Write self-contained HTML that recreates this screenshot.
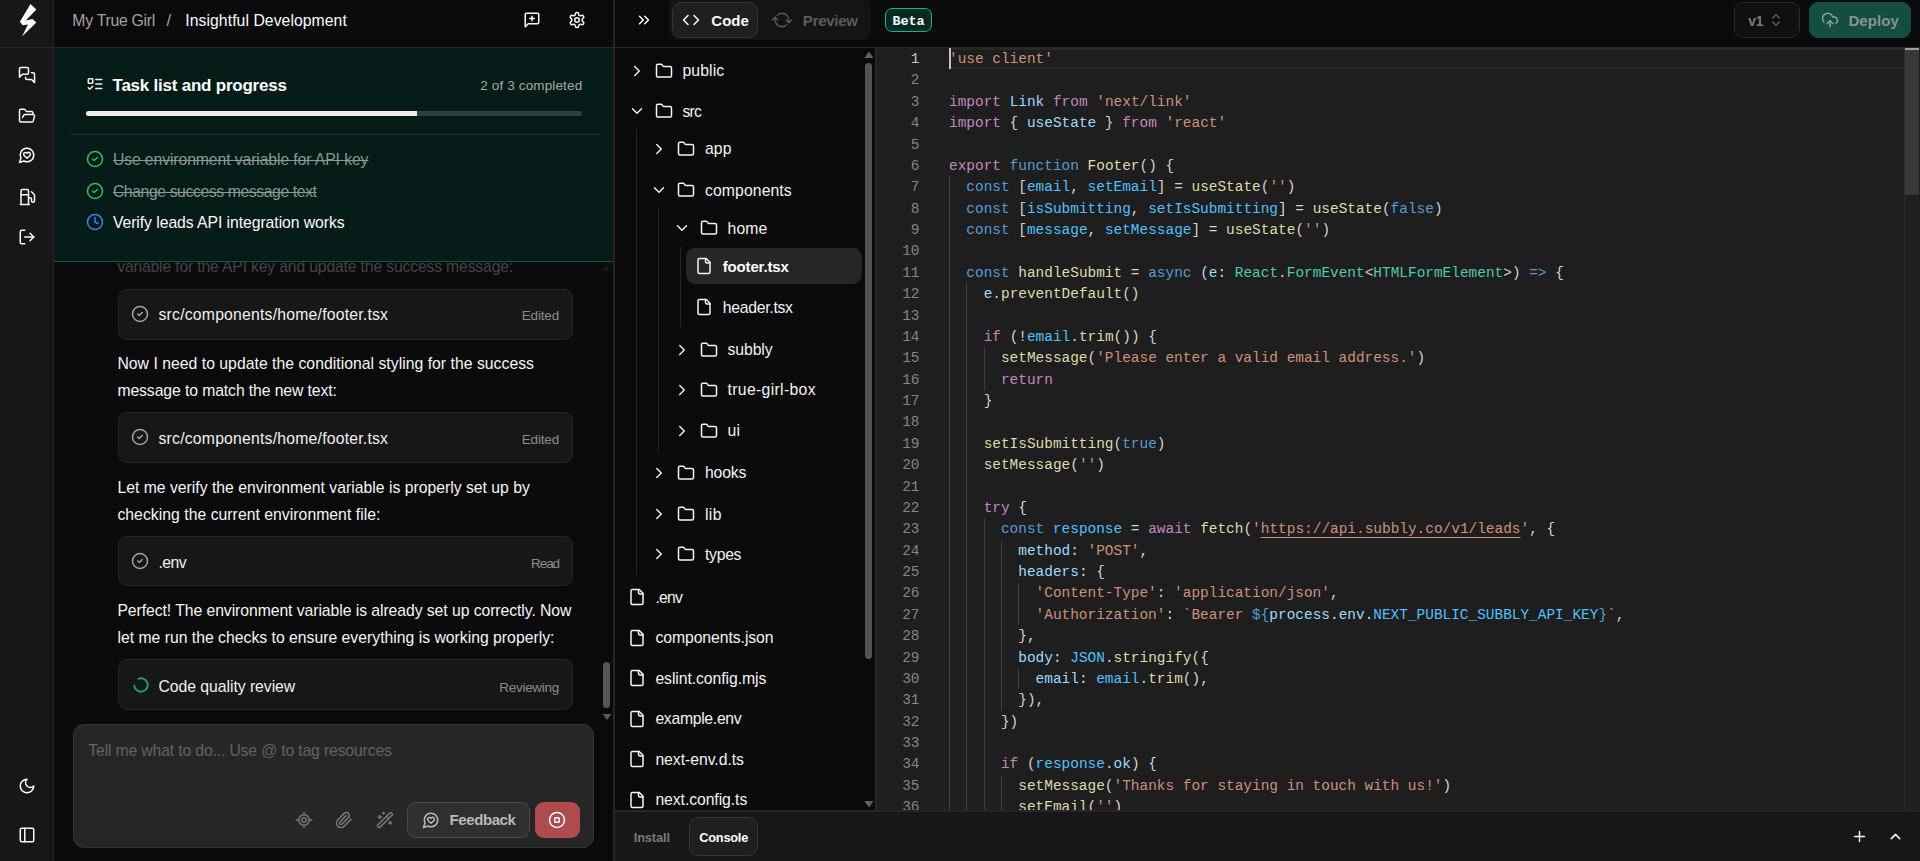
<!DOCTYPE html>
<html lang="en"><head><meta charset="utf-8"><title>Insightful Development</title>
<style>
html,body{margin:0;padding:0}
body{width:1920px;height:861px;overflow:hidden;position:relative;background:#0a0a0a;font-family:'Liberation Sans', sans-serif;}
.b{position:absolute}
.ic{position:absolute;display:block;overflow:visible}
.t{position:absolute;white-space:pre;}
.ln{position:absolute;left:0;margin-top:1px;width:43.5px;text-align:right;font-family:'Liberation Mono', monospace;font-size:14.43px;line-height:21.375px;height:21.375px;white-space:pre}
.cl{position:absolute;left:73px;margin-top:1px;font-family:'Liberation Mono', monospace;font-size:14.43px;line-height:21.375px;height:21.375px;white-space:pre;color:#d4d4d4;letter-spacing:0.002px}
</style></head>
<body>
<div class="b" style="left:0.00px;top:0.00px;width:53.00px;height:861.00px;background:#171717;"></div>
<div class="b" style="left:53.00px;top:0.00px;width:1.00px;height:861.00px;background:#262626;"></div>
<div class="b" style="left:0.00px;top:47.00px;width:1920.00px;height:1.00px;background:#262626;"></div>
<div class="b" style="left:613.00px;top:0.00px;width:2.00px;height:861.00px;background:#262626;"></div>
<svg class="ic" style="left:0;top:0;width:54px;height:47px" viewBox="0 0 54 47"><polygon fill="#fafafa" points="30.45,4.1 36.4,9.5 25.8,20.4 32.5,18.9 36.4,22.5 22.0,36.4 27.9,24.4 22.6,25.3 19.9,21.7"/></svg>
<svg class="ic" style="left:18.00px;top:66.00px;width:18px;height:18px;" viewBox="0 0 24 24" fill="none" stroke="#fafafa" stroke-width="2" stroke-linecap="round" stroke-linejoin="round"><path d="M14 9a2 2 0 0 1-2 2H6l-4 4V4a2 2 0 0 1 2-2h8a2 2 0 0 1 2 2z"/><path d="M18 9h2a2 2 0 0 1 2 2v11l-4-4h-6a2 2 0 0 1-2-2v-1"/></svg>
<svg class="ic" style="left:18.00px;top:106.70px;width:18px;height:18px;" viewBox="0 0 24 24" fill="none" stroke="#fafafa" stroke-width="2" stroke-linecap="round" stroke-linejoin="round"><path d="m6 14 1.5-2.9A2 2 0 0 1 9.24 10H20a2 2 0 0 1 1.94 2.5l-1.54 6a2 2 0 0 1-1.95 1.5H4a2 2 0 0 1-2-2V5a2 2 0 0 1 2-2h3.9a2 2 0 0 1 1.69.9l.81 1.2a2 2 0 0 0 1.67.9H18a2 2 0 0 1 2 2v2"/></svg>
<svg class="ic" style="left:18.00px;top:146.30px;width:18px;height:18px;" viewBox="0 0 24 24" fill="none" stroke="#fafafa" stroke-width="2" stroke-linecap="round" stroke-linejoin="round"><path d="M7.9 20A9 9 0 1 0 4 16.1L2 22Z"/><path d="M15.8 9.2a2.5 2.5 0 0 0-3.5 0l-.3.4-.35-.3a2.42 2.42 0 1 0-3.2 3.6l3.6 3.5 3.6-3.5c1.2-1.2 1.1-2.7.2-3.7"/></svg>
<svg class="ic" style="left:18.00px;top:188.00px;width:18px;height:18px;" viewBox="0 0 24 24" fill="none" stroke="#fafafa" stroke-width="2" stroke-linecap="round" stroke-linejoin="round"><line x1="3" x2="15" y1="22" y2="22"/><line x1="4" x2="14" y1="9" y2="9"/><path d="M14 22V4a2 2 0 0 0-2-2H6a2 2 0 0 0-2 2v18"/><path d="M14 13h2a2 2 0 0 1 2 2v2a2 2 0 0 0 2 2a2 2 0 0 0 2-2V9.83a2 2 0 0 0-.59-1.42L18 5"/></svg>
<svg class="ic" style="left:18.00px;top:228.30px;width:18px;height:18px;" viewBox="0 0 24 24" fill="none" stroke="#fafafa" stroke-width="2" stroke-linecap="round" stroke-linejoin="round"><path d="M9 21H5a2 2 0 0 1-2-2V5a2 2 0 0 1 2-2h4"/><polyline points="16 17 21 12 16 7"/><line x1="21" x2="9" y1="12" y2="12"/></svg>
<svg class="ic" style="left:18.00px;top:777.00px;width:18px;height:18px;" viewBox="0 0 24 24" fill="none" stroke="#fafafa" stroke-width="2" stroke-linecap="round" stroke-linejoin="round"><path d="M12 3a6 6 0 0 0 9 9 9 9 0 1 1-9-9Z"/></svg>
<svg class="ic" style="left:18.00px;top:826.00px;width:18px;height:18px;" viewBox="0 0 24 24" fill="none" stroke="#fafafa" stroke-width="2" stroke-linecap="round" stroke-linejoin="round"><rect width="18" height="18" x="3" y="3" rx="2"/><path d="M9 3v18"/></svg>
<span class="t" style="top:11px;font-size:15.75px;line-height:19px;color:#a3a3a3;left:72.30px;letter-spacing:-0.251px;">My True Girl</span>
<span class="t" style="top:10px;font-size:16.5px;line-height:20px;color:#a3a3a3;left:166.50px;">/</span>
<span class="t" style="top:11px;font-size:15.75px;line-height:19px;color:#fafafa;left:185.30px;letter-spacing:0.061px;">Insightful Development</span>
<svg class="ic" style="left:523.00px;top:11.00px;width:18px;height:18px;" viewBox="0 0 24 24" fill="none" stroke="#fafafa" stroke-width="2" stroke-linecap="round" stroke-linejoin="round"><path d="M21 15a2 2 0 0 1-2 2H7l-4 4V5a2 2 0 0 1 2-2h14a2 2 0 0 1 2 2z"/><path d="M12 7v6"/><path d="M9 10h6"/></svg>
<svg class="ic" style="left:568.00px;top:11.00px;width:18px;height:18px;" viewBox="0 0 24 24" fill="none" stroke="#fafafa" stroke-width="2" stroke-linecap="round" stroke-linejoin="round"><path d="M12.22 2h-.44a2 2 0 0 0-2 2v.18a2 2 0 0 1-1 1.73l-.43.25a2 2 0 0 1-2 0l-.15-.08a2 2 0 0 0-2.73.73l-.22.38a2 2 0 0 0 .73 2.73l.15.1a2 2 0 0 1 1 1.72v.51a2 2 0 0 1-1 1.74l-.15.09a2 2 0 0 0-.73 2.73l.22.38a2 2 0 0 0 2.73.73l.15-.08a2 2 0 0 1 2 0l.43.25a2 2 0 0 1 1 1.73V20a2 2 0 0 0 2 2h.44a2 2 0 0 0 2-2v-.18a2 2 0 0 1 1-1.73l.43-.25a2 2 0 0 1 2 0l.15.08a2 2 0 0 0 2.73-.73l.22-.39a2 2 0 0 0-.73-2.73l-.15-.08a2 2 0 0 1-1-1.74v-.5a2 2 0 0 1 1-1.74l.15-.09a2 2 0 0 0 .73-2.73l-.22-.38a2 2 0 0 0-2.73-.73l-.15.08a2 2 0 0 1-2 0l-.43-.25a2 2 0 0 1-1-1.73V4a2 2 0 0 0-2-2z"/><circle cx="12" cy="12" r="3"/></svg>
<div class="b" style="left:54.00px;top:48.00px;width:559.00px;height:214.00px;background:#051b17;"></div>
<div class="b" style="left:54.00px;top:261.00px;width:559.00px;height:1.00px;background:#0c5a49;"></div>
<svg class="ic" style="left:86.00px;top:75.00px;width:18px;height:18px;" viewBox="0 0 24 24" fill="none" stroke="#f0f0f0" stroke-width="2" stroke-linecap="round" stroke-linejoin="round"><rect x="3" y="5" width="6" height="6" rx="1"/><path d="m3 17 2 2 4-4"/><path d="M13 6h8"/><path d="M13 12h8"/><path d="M13 18h8"/></svg>
<span class="t" style="top:75px;font-size:17px;line-height:21px;color:#ffffff;left:112.50px;font-weight:700;letter-spacing:-0.229px;">Task list and progress</span>
<span class="t" style="top:77px;font-size:13.5px;line-height:17px;color:#a3a9a8;right:1337.70px;letter-spacing:0.138px;">2 of 3 completed</span>
<div class="b" style="left:86.00px;top:110.50px;width:496.30px;height:5.50px;background:#2c403e;border-radius:3px;"></div>
<div class="b" style="left:86.00px;top:110.50px;width:330.80px;height:5.50px;background:#ececec;border-radius:3px 0 0 3px;"></div>
<div class="b" style="left:67.50px;top:134.00px;width:532.50px;height:1.00px;background:#1c2f2d;"></div>
<svg class="ic" style="left:86.00px;top:150.00px;width:18px;height:18px;" viewBox="0 0 24 24" fill="none" stroke="#22c55e" stroke-width="2" stroke-linecap="round" stroke-linejoin="round"><circle cx="12" cy="12" r="10"/><path d="m9 12 2 2 4-4"/></svg>
<span class="t" style="top:150px;font-size:15.75px;line-height:19px;color:#8b9695;left:112.90px;letter-spacing:-0.101px;text-decoration:line-through;">Use environment variable for API key</span>
<svg class="ic" style="left:86.00px;top:181.60px;width:18px;height:18px;" viewBox="0 0 24 24" fill="none" stroke="#22c55e" stroke-width="2" stroke-linecap="round" stroke-linejoin="round"><circle cx="12" cy="12" r="10"/><path d="m9 12 2 2 4-4"/></svg>
<span class="t" style="top:182px;font-size:15.75px;line-height:19px;color:#8b9695;left:112.90px;letter-spacing:-0.400px;text-decoration:line-through;">Change success message text</span>
<svg class="ic" style="left:86.00px;top:213.20px;width:18px;height:18px;" viewBox="0 0 24 24" fill="none" stroke="#3b82f6" stroke-width="2" stroke-linecap="round" stroke-linejoin="round"><circle cx="12" cy="12" r="10"/><polyline points="12 6 12 12 16 14"/></svg>
<span class="t" style="top:213px;font-size:15.75px;line-height:19px;color:#fafafa;left:112.90px;letter-spacing:-0.059px;">Verify leads API integration works</span>
<div class="b" style="left:54px;top:262px;width:559px;height:20px;overflow:hidden">
<span class="t" style="top:-5px;font-size:15.75px;line-height:19px;color:#444444;left:63.20px;letter-spacing:-0.170px;">variable for the API key and update the success message:</span>
</div>
<div class="b" style="left:117.50px;top:289.00px;width:455.50px;height:51.00px;background:#171717;border:1px solid #262626;border-radius:9px;box-sizing:border-box;"></div>
<svg class="ic" style="left:131.10px;top:305.10px;width:18px;height:18px;" viewBox="0 0 24 24" fill="none" stroke="#a3a3a3" stroke-width="2" stroke-linecap="round" stroke-linejoin="round"><circle cx="12" cy="12" r="10"/><path d="m9 12 2 2 4-4"/></svg>
<span class="t" style="top:305px;font-size:15.75px;line-height:19px;color:#f0f0f0;left:158.50px;letter-spacing:0.216px;">src/components/home/footer.tsx</span>
<span class="t" style="top:307px;font-size:13.5px;line-height:17px;color:#8c8c8c;right:1361.00px;letter-spacing:-0.176px;">Edited</span>
<div class="b" style="left:117.50px;top:412.00px;width:455.50px;height:51.00px;background:#171717;border:1px solid #262626;border-radius:9px;box-sizing:border-box;"></div>
<svg class="ic" style="left:131.10px;top:428.10px;width:18px;height:18px;" viewBox="0 0 24 24" fill="none" stroke="#a3a3a3" stroke-width="2" stroke-linecap="round" stroke-linejoin="round"><circle cx="12" cy="12" r="10"/><path d="m9 12 2 2 4-4"/></svg>
<span class="t" style="top:429px;font-size:15.75px;line-height:19px;color:#f0f0f0;left:158.50px;letter-spacing:0.216px;">src/components/home/footer.tsx</span>
<span class="t" style="top:431px;font-size:13.5px;line-height:17px;color:#8c8c8c;right:1361.00px;letter-spacing:-0.176px;">Edited</span>
<div class="b" style="left:117.50px;top:536.00px;width:455.50px;height:50.00px;background:#171717;border:1px solid #262626;border-radius:9px;box-sizing:border-box;"></div>
<svg class="ic" style="left:131.10px;top:551.60px;width:18px;height:18px;" viewBox="0 0 24 24" fill="none" stroke="#a3a3a3" stroke-width="2" stroke-linecap="round" stroke-linejoin="round"><circle cx="12" cy="12" r="10"/><path d="m9 12 2 2 4-4"/></svg>
<span class="t" style="top:553px;font-size:15.75px;line-height:19px;color:#f0f0f0;left:158.50px;letter-spacing:-0.560px;">.env</span>
<span class="t" style="top:555px;font-size:13.5px;line-height:17px;color:#8c8c8c;right:1361.00px;letter-spacing:-1.094px;">Read</span>
<div class="b" style="left:117.50px;top:659.00px;width:455.50px;height:51.00px;background:#171717;border:1px solid #262626;border-radius:9px;box-sizing:border-box;"></div>
<svg class="ic" style="left:131.60px;top:675.70px;width:18px;height:18px;transform:rotate(-112deg);" viewBox="0 0 24 24" fill="none" stroke="#1f9d80" stroke-width="2.5" stroke-linecap="round" stroke-linejoin="round"><path d="M21 12a9 9 0 1 1-6.219-8.56"/></svg>
<span class="t" style="top:677px;font-size:15.75px;line-height:19px;color:#f0f0f0;left:158.50px;letter-spacing:-0.042px;">Code quality review</span>
<span class="t" style="top:679px;font-size:13.5px;line-height:17px;color:#8c8c8c;right:1361.00px;letter-spacing:-0.285px;">Reviewing</span>
<span class="t" style="top:354px;font-size:15.75px;line-height:19px;color:#f5f5f5;left:117.40px;letter-spacing:0.027px;">Now I need to update the conditional styling for the success</span>
<span class="t" style="top:381px;font-size:15.75px;line-height:19px;color:#f5f5f5;left:117.40px;letter-spacing:-0.096px;">message to match the new text:</span>
<span class="t" style="top:478px;font-size:15.75px;line-height:19px;color:#f5f5f5;left:117.40px;letter-spacing:0.003px;">Let me verify the environment variable is properly set up by</span>
<span class="t" style="top:505px;font-size:15.75px;line-height:19px;color:#f5f5f5;left:117.40px;letter-spacing:0.033px;">checking the current environment file:</span>
<span class="t" style="top:601px;font-size:15.75px;line-height:19px;color:#f5f5f5;left:117.40px;letter-spacing:-0.063px;">Perfect! The environment variable is already set up correctly. Now</span>
<span class="t" style="top:628px;font-size:15.75px;line-height:19px;color:#f5f5f5;left:117.40px;letter-spacing:0.003px;">let me run the checks to ensure everything is working properly:</span>
<svg class="ic" style="left:601px;top:264px;width:10px;height:8px" viewBox="0 0 10 8"><polygon points="5,1.5 9,6.5 1,6.5" fill="#1c1c1c"/></svg>
<div class="b" style="left:602.80px;top:662.00px;width:7.20px;height:46.00px;background:#565656;border-radius:3.6px;"></div>
<svg class="ic" style="left:601.5px;top:713px;width:10px;height:8px" viewBox="0 0 10 8"><polygon points="0.6,1 9.4,1 5,7" fill="#5a5a5a"/></svg>
<div class="b" style="left:73.00px;top:724.00px;width:521.30px;height:124.00px;background:#262626;border:1px solid #363636;border-radius:11px;box-sizing:border-box;"></div>
<span class="t" style="top:741px;font-size:15.75px;line-height:19px;color:#636363;left:88.30px;letter-spacing:-0.152px;">Tell me what to do... Use @ to tag resources</span>
<svg class="ic" style="left:295.00px;top:811.00px;width:18px;height:18px;" viewBox="0 0 24 24" fill="none" stroke="#7a7a7a" stroke-width="2" stroke-linecap="round" stroke-linejoin="round"><line x1="2" x2="5" y1="12" y2="12"/><line x1="19" x2="22" y1="12" y2="12"/><line x1="12" x2="12" y1="2" y2="5"/><line x1="12" x2="12" y1="19" y2="22"/><circle cx="12" cy="12" r="7"/><circle cx="12" cy="12" r="3"/></svg>
<svg class="ic" style="left:335.20px;top:811.00px;width:18px;height:18px;" viewBox="0 0 24 24" fill="none" stroke="#7a7a7a" stroke-width="2" stroke-linecap="round" stroke-linejoin="round"><path d="m21.44 11.05-9.19 9.19a6 6 0 0 1-8.49-8.49l8.57-8.57A4 4 0 1 1 18 8.84l-8.59 8.57a2 2 0 0 1-2.83-2.83l8.49-8.48"/></svg>
<svg class="ic" style="left:375.80px;top:811.00px;width:18px;height:18px;" viewBox="0 0 24 24" fill="none" stroke="#7a7a7a" stroke-width="2" stroke-linecap="round" stroke-linejoin="round"><path d="m21.64 3.64-1.28-1.28a1.21 1.21 0 0 0-1.72 0L2.36 18.64a1.21 1.21 0 0 0 0 1.72l1.28 1.28a1.2 1.2 0 0 0 1.72 0L21.64 5.36a1.2 1.2 0 0 0 0-1.72"/><path d="m14 7 3 3"/><path d="M5 6v4"/><path d="M19 14v4"/><path d="M10 2v2"/><path d="M7 8H3"/><path d="M21 16h-4"/><path d="M11 3H9"/></svg>
<div class="b" style="left:407.00px;top:802.00px;width:123.00px;height:36.00px;background:#2f2f2f;border:1px solid #4a4a4a;border-radius:9px;box-sizing:border-box;"></div>
<svg class="ic" style="left:422.00px;top:811.00px;width:18px;height:18px;" viewBox="0 0 24 24" fill="none" stroke="#b8b8b8" stroke-width="2" stroke-linecap="round" stroke-linejoin="round"><path d="M7.9 20A9 9 0 1 0 4 16.1L2 22Z"/><path d="M15.8 9.2a2.5 2.5 0 0 0-3.5 0l-.3.4-.35-.3a2.42 2.42 0 1 0-3.2 3.6l3.6 3.5 3.6-3.5c1.2-1.2 1.1-2.7.2-3.7"/></svg>
<span class="t" style="top:810px;font-size:15px;line-height:19px;color:#b8b8b8;left:449.50px;font-weight:700;letter-spacing:-0.400px;">Feedback</span>
<div class="b" style="left:535.00px;top:802.00px;width:45.00px;height:36.00px;background:#ad4b4f;border-radius:9px;"></div>
<svg class="ic" style="left:548.30px;top:811.00px;width:18px;height:18px;" viewBox="0 0 24 24" fill="none" stroke="#ffffff" stroke-width="2" stroke-linecap="round" stroke-linejoin="round"><circle cx="12" cy="12" r="10"/><rect x="9" y="9" width="6" height="6" rx="1"/></svg>
<svg class="ic" style="left:635.00px;top:11.00px;width:18px;height:18px;" viewBox="0 0 24 24" fill="none" stroke="#fafafa" stroke-width="2" stroke-linecap="round" stroke-linejoin="round"><path d="m6 17 5-5-5-5"/><path d="m13 17 5-5-5-5"/></svg>
<div class="b" style="left:669.00px;top:0.00px;width:202.00px;height:40.00px;background:#141414;border-radius:10px;border-top-left-radius:6px;border-top-right-radius:6px;"></div>
<div class="b" style="left:672.00px;top:2.00px;width:86.00px;height:36.00px;background:#1f1f1f;border:1px solid #353535;border-radius:9px;box-sizing:border-box;"></div>
<svg class="ic" style="left:682.00px;top:11.00px;width:18px;height:18px;" viewBox="0 0 24 24" fill="none" stroke="#fafafa" stroke-width="2" stroke-linecap="round" stroke-linejoin="round"><polyline points="16 18 22 12 16 6"/><polyline points="8 6 2 12 8 18"/></svg>
<span class="t" style="top:11px;font-size:15px;line-height:19px;color:#fafafa;left:711.30px;font-weight:700;letter-spacing:0.000px;">Code</span>
<svg class="ic" style="left:773.00px;top:10.80px;width:18px;height:18px;transform:rotate(45deg);" viewBox="0 0 24 24" fill="none" stroke="#565656" stroke-width="2" stroke-linecap="round" stroke-linejoin="round"><path d="M3 12a9 9 0 0 1 9-9 9.75 9.75 0 0 1 6.74 2.74L21 8"/><path d="M21 3v5h-5"/><path d="M21 12a9 9 0 0 1-9 9 9.75 9.75 0 0 1-6.74-2.74L3 16"/><path d="M8 16H3v5"/></svg>
<span class="t" style="top:11px;font-size:15px;line-height:19px;color:#5c5c5c;left:802.80px;font-weight:700;letter-spacing:-0.253px;">Preview</span>
<div class="b" style="left:885.00px;top:8.00px;width:47.00px;height:24.00px;background:#032b24;border:1px solid #12b583;border-radius:7px;box-sizing:border-box;"></div>
<span class="t" style="top:13px;font-size:13.5px;line-height:17px;color:#ffffff;left:892.40px;font-weight:700;font-family:'Liberation Mono', monospace;letter-spacing:-0.069px;">Beta</span>
<div class="b" style="left:1734.00px;top:2.00px;width:66.00px;height:36.00px;background:#101010;border:1px solid #2a2a2a;border-radius:9px;box-sizing:border-box;"></div>
<span class="t" style="top:13px;font-size:13.8px;line-height:17px;color:#7c7c7c;left:1748.20px;font-weight:700;">v1</span>
<svg class="ic" style="left:1768.00px;top:12.00px;width:16px;height:16px;" viewBox="0 0 24 24" fill="none" stroke="#5a5a5a" stroke-width="2" stroke-linecap="round" stroke-linejoin="round"><path d="m7 15 5 5 5-5"/><path d="m7 9 5-5 5 5"/></svg>
<div class="b" style="left:1809.00px;top:2.00px;width:102.00px;height:36.00px;background:#134e40;border-radius:9px;"></div>
<svg class="ic" style="left:1821.00px;top:11.00px;width:18px;height:18px;" viewBox="0 0 24 24" fill="none" stroke="#8fa09b" stroke-width="2" stroke-linecap="round" stroke-linejoin="round"><path d="M12 13v8"/><path d="M4 14.899A7 7 0 1 1 15.71 8h1.79a4.5 4.5 0 0 1 2.5 8.242"/><path d="m8 17 4-4 4 4"/></svg>
<span class="t" style="top:11px;font-size:15px;line-height:19px;color:#8a948f;left:1848.40px;font-weight:700;letter-spacing:0.097px;">Deploy</span>
<div class="b" style="left:686.00px;top:248.00px;width:175.50px;height:36.00px;background:#262626;border-radius:9px;"></div>
<div class="b" style="left:636.00px;top:129.00px;width:1.00px;height:446.00px;background:#262626;"></div>
<div class="b" style="left:658.00px;top:208.00px;width:1.00px;height:243.00px;background:#262626;"></div>
<div class="b" style="left:680.00px;top:246.00px;width:1.00px;height:81.00px;background:#262626;"></div>
<div class="b" style="left:615px;top:48px;width:261px;height:762px;overflow:hidden">
<svg class="ic" style="left:13.00px;top:13.80px;width:18px;height:18px;" viewBox="0 0 24 24" fill="none" stroke="#f0f0f0" stroke-width="2" stroke-linecap="round" stroke-linejoin="round"><path d="m9 18 6-6-6-6"/></svg>
<svg class="ic" style="left:39.80px;top:13.80px;width:18px;height:18px;" viewBox="0 0 24 24" fill="none" stroke="#f5f5f5" stroke-width="2" stroke-linecap="round" stroke-linejoin="round"><path d="M20 20a2 2 0 0 0 2-2V8a2 2 0 0 0-2-2h-7.9a2 2 0 0 1-1.69-.9L9.6 3.9A2 2 0 0 0 7.93 3H4a2 2 0 0 0-2 2v13a2 2 0 0 0 2 2Z"/></svg>
<span class="t" style="top:13px;font-size:15.75px;line-height:19px;color:#f2f2f2;left:67.50px;letter-spacing:0.109px;">public</span>
<svg class="ic" style="left:13.00px;top:53.70px;width:18px;height:18px;" viewBox="0 0 24 24" fill="none" stroke="#f0f0f0" stroke-width="2" stroke-linecap="round" stroke-linejoin="round"><path d="m6 9 6 6 6-6"/></svg>
<svg class="ic" style="left:39.80px;top:53.70px;width:18px;height:18px;" viewBox="0 0 24 24" fill="none" stroke="#f5f5f5" stroke-width="2" stroke-linecap="round" stroke-linejoin="round"><path d="M20 20a2 2 0 0 0 2-2V8a2 2 0 0 0-2-2h-7.9a2 2 0 0 1-1.69-.9L9.6 3.9A2 2 0 0 0 7.93 3H4a2 2 0 0 0-2 2v13a2 2 0 0 0 2 2Z"/></svg>
<span class="t" style="top:54px;font-size:15.75px;line-height:19px;color:#f2f2f2;left:67.50px;letter-spacing:-0.800px;">src</span>
<svg class="ic" style="left:35.10px;top:92.20px;width:18px;height:18px;" viewBox="0 0 24 24" fill="none" stroke="#f0f0f0" stroke-width="2" stroke-linecap="round" stroke-linejoin="round"><path d="m9 18 6-6-6-6"/></svg>
<svg class="ic" style="left:62.30px;top:92.20px;width:18px;height:18px;" viewBox="0 0 24 24" fill="none" stroke="#f5f5f5" stroke-width="2" stroke-linecap="round" stroke-linejoin="round"><path d="M20 20a2 2 0 0 0 2-2V8a2 2 0 0 0-2-2h-7.9a2 2 0 0 1-1.69-.9L9.6 3.9A2 2 0 0 0 7.93 3H4a2 2 0 0 0-2 2v13a2 2 0 0 0 2 2Z"/></svg>
<span class="t" style="top:91px;font-size:15.75px;line-height:19px;color:#f2f2f2;left:90.00px;letter-spacing:0.059px;">app</span>
<svg class="ic" style="left:35.10px;top:133.00px;width:18px;height:18px;" viewBox="0 0 24 24" fill="none" stroke="#f0f0f0" stroke-width="2" stroke-linecap="round" stroke-linejoin="round"><path d="m6 9 6 6 6-6"/></svg>
<svg class="ic" style="left:62.30px;top:133.00px;width:18px;height:18px;" viewBox="0 0 24 24" fill="none" stroke="#f5f5f5" stroke-width="2" stroke-linecap="round" stroke-linejoin="round"><path d="M20 20a2 2 0 0 0 2-2V8a2 2 0 0 0-2-2h-7.9a2 2 0 0 1-1.69-.9L9.6 3.9A2 2 0 0 0 7.93 3H4a2 2 0 0 0-2 2v13a2 2 0 0 0 2 2Z"/></svg>
<span class="t" style="top:133px;font-size:15.75px;line-height:19px;color:#f2f2f2;left:90.00px;letter-spacing:0.099px;">components</span>
<svg class="ic" style="left:58.00px;top:171.00px;width:18px;height:18px;" viewBox="0 0 24 24" fill="none" stroke="#f0f0f0" stroke-width="2" stroke-linecap="round" stroke-linejoin="round"><path d="m6 9 6 6 6-6"/></svg>
<svg class="ic" style="left:84.80px;top:171.00px;width:18px;height:18px;" viewBox="0 0 24 24" fill="none" stroke="#f5f5f5" stroke-width="2" stroke-linecap="round" stroke-linejoin="round"><path d="M20 20a2 2 0 0 0 2-2V8a2 2 0 0 0-2-2h-7.9a2 2 0 0 1-1.69-.9L9.6 3.9A2 2 0 0 0 7.93 3H4a2 2 0 0 0-2 2v13a2 2 0 0 0 2 2Z"/></svg>
<span class="t" style="top:171px;font-size:15.75px;line-height:19px;color:#f2f2f2;left:112.50px;letter-spacing:0.131px;">home</span>
<svg class="ic" style="left:80.30px;top:209.00px;width:18px;height:18px;" viewBox="0 0 24 24" fill="none" stroke="#f5f5f5" stroke-width="2" stroke-linecap="round" stroke-linejoin="round"><path d="M15 2H6a2 2 0 0 0-2 2v16a2 2 0 0 0 2 2h12a2 2 0 0 0 2-2V7Z"/><path d="M14 2v4a2 2 0 0 0 2 2h4"/></svg>
<span class="t" style="top:209px;font-size:15px;line-height:19px;color:#ffffff;left:107.70px;font-weight:700;letter-spacing:-0.146px;">footer.tsx</span>
<svg class="ic" style="left:80.30px;top:250.00px;width:18px;height:18px;" viewBox="0 0 24 24" fill="none" stroke="#f5f5f5" stroke-width="2" stroke-linecap="round" stroke-linejoin="round"><path d="M15 2H6a2 2 0 0 0-2 2v16a2 2 0 0 0 2 2h12a2 2 0 0 0 2-2V7Z"/><path d="M14 2v4a2 2 0 0 0 2 2h4"/></svg>
<span class="t" style="top:250px;font-size:15.75px;line-height:19px;color:#f2f2f2;left:107.70px;letter-spacing:-0.265px;">header.tsx</span>
<svg class="ic" style="left:58.00px;top:292.90px;width:18px;height:18px;" viewBox="0 0 24 24" fill="none" stroke="#f0f0f0" stroke-width="2" stroke-linecap="round" stroke-linejoin="round"><path d="m9 18 6-6-6-6"/></svg>
<svg class="ic" style="left:84.80px;top:292.90px;width:18px;height:18px;" viewBox="0 0 24 24" fill="none" stroke="#f5f5f5" stroke-width="2" stroke-linecap="round" stroke-linejoin="round"><path d="M20 20a2 2 0 0 0 2-2V8a2 2 0 0 0-2-2h-7.9a2 2 0 0 1-1.69-.9L9.6 3.9A2 2 0 0 0 7.93 3H4a2 2 0 0 0-2 2v13a2 2 0 0 0 2 2Z"/></svg>
<span class="t" style="top:292px;font-size:15.75px;line-height:19px;color:#f2f2f2;left:112.50px;letter-spacing:-0.086px;">subbly</span>
<svg class="ic" style="left:58.00px;top:333.20px;width:18px;height:18px;" viewBox="0 0 24 24" fill="none" stroke="#f0f0f0" stroke-width="2" stroke-linecap="round" stroke-linejoin="round"><path d="m9 18 6-6-6-6"/></svg>
<svg class="ic" style="left:84.80px;top:333.20px;width:18px;height:18px;" viewBox="0 0 24 24" fill="none" stroke="#f5f5f5" stroke-width="2" stroke-linecap="round" stroke-linejoin="round"><path d="M20 20a2 2 0 0 0 2-2V8a2 2 0 0 0-2-2h-7.9a2 2 0 0 1-1.69-.9L9.6 3.9A2 2 0 0 0 7.93 3H4a2 2 0 0 0-2 2v13a2 2 0 0 0 2 2Z"/></svg>
<span class="t" style="top:332px;font-size:15.75px;line-height:19px;color:#f2f2f2;left:112.50px;letter-spacing:0.339px;">true-girl-box</span>
<svg class="ic" style="left:58.00px;top:374.00px;width:18px;height:18px;" viewBox="0 0 24 24" fill="none" stroke="#f0f0f0" stroke-width="2" stroke-linecap="round" stroke-linejoin="round"><path d="m9 18 6-6-6-6"/></svg>
<svg class="ic" style="left:84.80px;top:374.00px;width:18px;height:18px;" viewBox="0 0 24 24" fill="none" stroke="#f5f5f5" stroke-width="2" stroke-linecap="round" stroke-linejoin="round"><path d="M20 20a2 2 0 0 0 2-2V8a2 2 0 0 0-2-2h-7.9a2 2 0 0 1-1.69-.9L9.6 3.9A2 2 0 0 0 7.93 3H4a2 2 0 0 0-2 2v13a2 2 0 0 0 2 2Z"/></svg>
<span class="t" style="top:373px;font-size:15.75px;line-height:19px;color:#f2f2f2;left:112.50px;letter-spacing:0.134px;">ui</span>
<svg class="ic" style="left:35.10px;top:416.00px;width:18px;height:18px;" viewBox="0 0 24 24" fill="none" stroke="#f0f0f0" stroke-width="2" stroke-linecap="round" stroke-linejoin="round"><path d="m9 18 6-6-6-6"/></svg>
<svg class="ic" style="left:62.30px;top:416.00px;width:18px;height:18px;" viewBox="0 0 24 24" fill="none" stroke="#f5f5f5" stroke-width="2" stroke-linecap="round" stroke-linejoin="round"><path d="M20 20a2 2 0 0 0 2-2V8a2 2 0 0 0-2-2h-7.9a2 2 0 0 1-1.69-.9L9.6 3.9A2 2 0 0 0 7.93 3H4a2 2 0 0 0-2 2v13a2 2 0 0 0 2 2Z"/></svg>
<span class="t" style="top:415px;font-size:15.75px;line-height:19px;color:#f2f2f2;left:90.00px;letter-spacing:-0.183px;">hooks</span>
<svg class="ic" style="left:35.10px;top:457.00px;width:18px;height:18px;" viewBox="0 0 24 24" fill="none" stroke="#f0f0f0" stroke-width="2" stroke-linecap="round" stroke-linejoin="round"><path d="m9 18 6-6-6-6"/></svg>
<svg class="ic" style="left:62.30px;top:457.00px;width:18px;height:18px;" viewBox="0 0 24 24" fill="none" stroke="#f5f5f5" stroke-width="2" stroke-linecap="round" stroke-linejoin="round"><path d="M20 20a2 2 0 0 0 2-2V8a2 2 0 0 0-2-2h-7.9a2 2 0 0 1-1.69-.9L9.6 3.9A2 2 0 0 0 7.93 3H4a2 2 0 0 0-2 2v13a2 2 0 0 0 2 2Z"/></svg>
<span class="t" style="top:457px;font-size:15.75px;line-height:19px;color:#f2f2f2;left:90.00px;letter-spacing:0.317px;">lib</span>
<svg class="ic" style="left:35.10px;top:497.30px;width:18px;height:18px;" viewBox="0 0 24 24" fill="none" stroke="#f0f0f0" stroke-width="2" stroke-linecap="round" stroke-linejoin="round"><path d="m9 18 6-6-6-6"/></svg>
<svg class="ic" style="left:62.30px;top:497.30px;width:18px;height:18px;" viewBox="0 0 24 24" fill="none" stroke="#f5f5f5" stroke-width="2" stroke-linecap="round" stroke-linejoin="round"><path d="M20 20a2 2 0 0 0 2-2V8a2 2 0 0 0-2-2h-7.9a2 2 0 0 1-1.69-.9L9.6 3.9A2 2 0 0 0 7.93 3H4a2 2 0 0 0-2 2v13a2 2 0 0 0 2 2Z"/></svg>
<span class="t" style="top:497px;font-size:15.75px;line-height:19px;color:#f2f2f2;left:90.00px;letter-spacing:-0.289px;">types</span>
<svg class="ic" style="left:13.20px;top:540.00px;width:18px;height:18px;" viewBox="0 0 24 24" fill="none" stroke="#f5f5f5" stroke-width="2" stroke-linecap="round" stroke-linejoin="round"><path d="M15 2H6a2 2 0 0 0-2 2v16a2 2 0 0 0 2 2h12a2 2 0 0 0 2-2V7Z"/><path d="M14 2v4a2 2 0 0 0 2 2h4"/></svg>
<span class="t" style="top:540px;font-size:15.75px;line-height:19px;color:#f2f2f2;left:40.40px;letter-spacing:-0.760px;">.env</span>
<svg class="ic" style="left:13.20px;top:581.00px;width:18px;height:18px;" viewBox="0 0 24 24" fill="none" stroke="#f5f5f5" stroke-width="2" stroke-linecap="round" stroke-linejoin="round"><path d="M15 2H6a2 2 0 0 0-2 2v16a2 2 0 0 0 2 2h12a2 2 0 0 0 2-2V7Z"/><path d="M14 2v4a2 2 0 0 0 2 2h4"/></svg>
<span class="t" style="top:580px;font-size:15.75px;line-height:19px;color:#f2f2f2;left:40.40px;letter-spacing:-0.063px;">components.json</span>
<svg class="ic" style="left:13.20px;top:621.40px;width:18px;height:18px;" viewBox="0 0 24 24" fill="none" stroke="#f5f5f5" stroke-width="2" stroke-linecap="round" stroke-linejoin="round"><path d="M15 2H6a2 2 0 0 0-2 2v16a2 2 0 0 0 2 2h12a2 2 0 0 0 2-2V7Z"/><path d="M14 2v4a2 2 0 0 0 2 2h4"/></svg>
<span class="t" style="top:621px;font-size:15.75px;line-height:19px;color:#f2f2f2;left:40.40px;letter-spacing:-0.072px;">eslint.config.mjs</span>
<svg class="ic" style="left:13.20px;top:662.00px;width:18px;height:18px;" viewBox="0 0 24 24" fill="none" stroke="#f5f5f5" stroke-width="2" stroke-linecap="round" stroke-linejoin="round"><path d="M15 2H6a2 2 0 0 0-2 2v16a2 2 0 0 0 2 2h12a2 2 0 0 0 2-2V7Z"/><path d="M14 2v4a2 2 0 0 0 2 2h4"/></svg>
<span class="t" style="top:661px;font-size:15.75px;line-height:19px;color:#f2f2f2;left:40.40px;letter-spacing:-0.301px;">example.env</span>
<svg class="ic" style="left:13.20px;top:702.30px;width:18px;height:18px;" viewBox="0 0 24 24" fill="none" stroke="#f5f5f5" stroke-width="2" stroke-linecap="round" stroke-linejoin="round"><path d="M15 2H6a2 2 0 0 0-2 2v16a2 2 0 0 0 2 2h12a2 2 0 0 0 2-2V7Z"/><path d="M14 2v4a2 2 0 0 0 2 2h4"/></svg>
<span class="t" style="top:702px;font-size:15.75px;line-height:19px;color:#f2f2f2;left:40.40px;letter-spacing:-0.035px;">next-env.d.ts</span>
<svg class="ic" style="left:13.20px;top:743.00px;width:18px;height:18px;" viewBox="0 0 24 24" fill="none" stroke="#f5f5f5" stroke-width="2" stroke-linecap="round" stroke-linejoin="round"><path d="M15 2H6a2 2 0 0 0-2 2v16a2 2 0 0 0 2 2h12a2 2 0 0 0 2-2V7Z"/><path d="M14 2v4a2 2 0 0 0 2 2h4"/></svg>
<span class="t" style="top:742px;font-size:15.75px;line-height:19px;color:#f2f2f2;left:40.40px;letter-spacing:-0.070px;">next.config.ts</span>
</div>
<svg class="ic" style="left:863.5px;top:50px;width:10px;height:9px" viewBox="0 0 10 9"><polygon points="5,1.4 9.5,8 0.5,8" fill="#606060"/></svg>
<div class="b" style="left:865.00px;top:63.00px;width:7.00px;height:596.00px;background:#545454;border-radius:3.5px;"></div>
<svg class="ic" style="left:863.5px;top:800px;width:10px;height:9px" viewBox="0 0 10 9"><polygon points="0.5,1 9.5,1 5,7.6" fill="#606060"/></svg>
<div class="b" style="left:875.00px;top:48.00px;width:2.00px;height:762.00px;background:#262626;"></div>
<div class="b" style="left:877.00px;top:48.00px;width:1043.00px;height:762.00px;background:#1e1e1e;"></div>
<div class="b" style="left:949.00px;top:48.00px;width:970.00px;height:2.00px;background:#282828;"></div>
<div class="b" style="left:949.00px;top:67.40px;width:970.00px;height:2.00px;background:#282828;"></div>
<div class="b" style="left:949.00px;top:48.00px;width:2.00px;height:21.00px;background:#c4c4c4;"></div>
<div class="b" style="left:1904.00px;top:48.00px;width:1.00px;height:762.00px;background:#2e2e2e;"></div>
<div class="b" style="left:1905.00px;top:48.00px;width:14.00px;height:147.00px;background:#383838;"></div>
<div class="b" style="left:1905.00px;top:48.00px;width:14.00px;height:1.50px;background:#a0a0a0;"></div>
<div class="b" style="left:876px;top:48px;width:1028px;height:762px;overflow:hidden">
<div class="b" style="left:73.00px;top:128.25px;width:1px;height:641.25px;background:#404040"></div>
<div class="b" style="left:90.32px;top:235.12px;width:1px;height:534.38px;background:#404040"></div>
<div class="b" style="left:107.64px;top:299.25px;width:1px;height:42.75px;background:#404040"></div>
<div class="b" style="left:107.64px;top:470.25px;width:1px;height:299.25px;background:#404040"></div>
<div class="b" style="left:124.96px;top:491.62px;width:1px;height:171.00px;background:#404040"></div>
<div class="b" style="left:124.96px;top:726.75px;width:1px;height:42.75px;background:#404040"></div>
<div class="b" style="left:142.28px;top:534.38px;width:1px;height:42.75px;background:#404040"></div>
<div class="b" style="left:142.28px;top:619.88px;width:1px;height:21.38px;background:#404040"></div>
<div class="ln" style="top:0.000px;color:#c6c6c6">1</div>
<div class="cl" style="top:0.000px"><span style="color:#ce9178">'use client'</span></div>
<div class="ln" style="top:21.375px;color:#858585">2</div>
<div class="ln" style="top:42.750px;color:#858585">3</div>
<div class="cl" style="top:42.750px"><span style="color:#c586c0">import</span> <span style="color:#9cdcfe">Link</span> <span style="color:#c586c0">from</span> <span style="color:#ce9178">'next/link'</span></div>
<div class="ln" style="top:64.125px;color:#858585">4</div>
<div class="cl" style="top:64.125px"><span style="color:#c586c0">import</span> { <span style="color:#9cdcfe">useState</span> } <span style="color:#c586c0">from</span> <span style="color:#ce9178">'react'</span></div>
<div class="ln" style="top:85.500px;color:#858585">5</div>
<div class="ln" style="top:106.875px;color:#858585">6</div>
<div class="cl" style="top:106.875px"><span style="color:#c586c0">export</span> <span style="color:#569cd6">function</span> <span style="color:#dcdcaa">Footer</span>() {</div>
<div class="ln" style="top:128.250px;color:#858585">7</div>
<div class="cl" style="top:128.250px">  <span style="color:#569cd6">const</span> [<span style="color:#4fc1ff">email</span>, <span style="color:#4fc1ff">setEmail</span>] = <span style="color:#dcdcaa">useState</span>(<span style="color:#ce9178">''</span>)</div>
<div class="ln" style="top:149.625px;color:#858585">8</div>
<div class="cl" style="top:149.625px">  <span style="color:#569cd6">const</span> [<span style="color:#4fc1ff">isSubmitting</span>, <span style="color:#4fc1ff">setIsSubmitting</span>] = <span style="color:#dcdcaa">useState</span>(<span style="color:#569cd6">false</span>)</div>
<div class="ln" style="top:171.000px;color:#858585">9</div>
<div class="cl" style="top:171.000px">  <span style="color:#569cd6">const</span> [<span style="color:#4fc1ff">message</span>, <span style="color:#4fc1ff">setMessage</span>] = <span style="color:#dcdcaa">useState</span>(<span style="color:#ce9178">''</span>)</div>
<div class="ln" style="top:192.375px;color:#858585">10</div>
<div class="ln" style="top:213.750px;color:#858585">11</div>
<div class="cl" style="top:213.750px">  <span style="color:#569cd6">const</span> <span style="color:#dcdcaa">handleSubmit</span> = <span style="color:#569cd6">async</span> (<span style="color:#9cdcfe">e</span>: <span style="color:#4ec9b0">React</span>.<span style="color:#4ec9b0">FormEvent</span>&lt;<span style="color:#4ec9b0">HTMLFormElement</span>&gt;) <span style="color:#569cd6">=&gt;</span> {</div>
<div class="ln" style="top:235.125px;color:#858585">12</div>
<div class="cl" style="top:235.125px">    <span style="color:#9cdcfe">e</span>.<span style="color:#dcdcaa">preventDefault</span>()</div>
<div class="ln" style="top:256.500px;color:#858585">13</div>
<div class="ln" style="top:277.875px;color:#858585">14</div>
<div class="cl" style="top:277.875px">    <span style="color:#c586c0">if</span> (!<span style="color:#4fc1ff">email</span>.<span style="color:#dcdcaa">trim</span>()) {</div>
<div class="ln" style="top:299.250px;color:#858585">15</div>
<div class="cl" style="top:299.250px">      <span style="color:#dcdcaa">setMessage</span>(<span style="color:#ce9178">'Please enter a valid email address.'</span>)</div>
<div class="ln" style="top:320.625px;color:#858585">16</div>
<div class="cl" style="top:320.625px">      <span style="color:#c586c0">return</span></div>
<div class="ln" style="top:342.000px;color:#858585">17</div>
<div class="cl" style="top:342.000px">    }</div>
<div class="ln" style="top:363.375px;color:#858585">18</div>
<div class="ln" style="top:384.750px;color:#858585">19</div>
<div class="cl" style="top:384.750px">    <span style="color:#dcdcaa">setIsSubmitting</span>(<span style="color:#569cd6">true</span>)</div>
<div class="ln" style="top:406.125px;color:#858585">20</div>
<div class="cl" style="top:406.125px">    <span style="color:#dcdcaa">setMessage</span>(<span style="color:#ce9178">''</span>)</div>
<div class="ln" style="top:427.500px;color:#858585">21</div>
<div class="ln" style="top:448.875px;color:#858585">22</div>
<div class="cl" style="top:448.875px">    <span style="color:#c586c0">try</span> {</div>
<div class="ln" style="top:470.250px;color:#858585">23</div>
<div class="cl" style="top:470.250px">      <span style="color:#569cd6">const</span> <span style="color:#4fc1ff">response</span> = <span style="color:#c586c0">await</span> <span style="color:#dcdcaa">fetch</span>(<span style="color:#ce9178">'</span><span style="color:#ce9178;text-decoration:underline;text-decoration-thickness:1px;text-underline-offset:4.2px">https://api.subbly.co/v1/leads</span><span style="color:#ce9178">'</span>, {</div>
<div class="ln" style="top:491.625px;color:#858585">24</div>
<div class="cl" style="top:491.625px">        <span style="color:#9cdcfe">method</span>: <span style="color:#ce9178">'POST'</span>,</div>
<div class="ln" style="top:513.000px;color:#858585">25</div>
<div class="cl" style="top:513.000px">        <span style="color:#9cdcfe">headers</span>: {</div>
<div class="ln" style="top:534.375px;color:#858585">26</div>
<div class="cl" style="top:534.375px">          <span style="color:#ce9178">'Content-Type'</span>: <span style="color:#ce9178">'application/json'</span>,</div>
<div class="ln" style="top:555.750px;color:#858585">27</div>
<div class="cl" style="top:555.750px">          <span style="color:#ce9178">'Authorization'</span>: <span style="color:#ce9178">`Bearer </span><span style="color:#569cd6">${</span><span style="color:#9cdcfe">process</span>.<span style="color:#9cdcfe">env</span>.<span style="color:#4fc1ff">NEXT_PUBLIC_SUBBLY_API_KEY</span><span style="color:#569cd6">}</span><span style="color:#ce9178">`</span>,</div>
<div class="ln" style="top:577.125px;color:#858585">28</div>
<div class="cl" style="top:577.125px">        },</div>
<div class="ln" style="top:598.500px;color:#858585">29</div>
<div class="cl" style="top:598.500px">        <span style="color:#9cdcfe">body</span>: <span style="color:#4fc1ff">JSON</span>.<span style="color:#dcdcaa">stringify</span>({</div>
<div class="ln" style="top:619.875px;color:#858585">30</div>
<div class="cl" style="top:619.875px">          <span style="color:#9cdcfe">email</span>: <span style="color:#4fc1ff">email</span>.<span style="color:#dcdcaa">trim</span>(),</div>
<div class="ln" style="top:641.250px;color:#858585">31</div>
<div class="cl" style="top:641.250px">        }),</div>
<div class="ln" style="top:662.625px;color:#858585">32</div>
<div class="cl" style="top:662.625px">      })</div>
<div class="ln" style="top:684.000px;color:#858585">33</div>
<div class="ln" style="top:705.375px;color:#858585">34</div>
<div class="cl" style="top:705.375px">      <span style="color:#c586c0">if</span> (<span style="color:#4fc1ff">response</span>.<span style="color:#9cdcfe">ok</span>) {</div>
<div class="ln" style="top:726.750px;color:#858585">35</div>
<div class="cl" style="top:726.750px">        <span style="color:#dcdcaa">setMessage</span>(<span style="color:#ce9178">'Thanks for staying in touch with us!'</span>)</div>
<div class="ln" style="top:748.125px;color:#858585">36</div>
<div class="cl" style="top:748.125px">        <span style="color:#dcdcaa">setEmail</span>(<span style="color:#ce9178">''</span>)</div>
</div>
<div class="b" style="left:615.00px;top:810.00px;width:1305.00px;height:2.00px;background:#262626;"></div>
<div class="b" style="left:615.00px;top:812.00px;width:1305.00px;height:49.00px;background:#171717;"></div>
<span class="t" style="top:829px;font-size:12.8px;line-height:17px;color:#7a7a7a;left:633.70px;font-weight:700;letter-spacing:-0.114px;">Install</span>
<div class="b" style="left:689.00px;top:817.00px;width:69.00px;height:39.00px;background:#1f1f1f;border:1px solid #363636;border-radius:9px;box-sizing:border-box;"></div>
<span class="t" style="top:829px;font-size:12.8px;line-height:17px;color:#ffffff;left:699.30px;font-weight:700;letter-spacing:-0.247px;">Console</span>
<svg class="ic" style="left:1850.50px;top:827.50px;width:17px;height:17px;" viewBox="0 0 24 24" fill="none" stroke="#fafafa" stroke-width="2" stroke-linecap="round" stroke-linejoin="round"><path d="M5 12h14"/><path d="M12 5v14"/></svg>
<svg class="ic" style="left:1886.50px;top:827.50px;width:17px;height:17px;" viewBox="0 0 24 24" fill="none" stroke="#fafafa" stroke-width="2" stroke-linecap="round" stroke-linejoin="round"><path d="m18 15-6-6-6 6"/></svg>
</body></html>
